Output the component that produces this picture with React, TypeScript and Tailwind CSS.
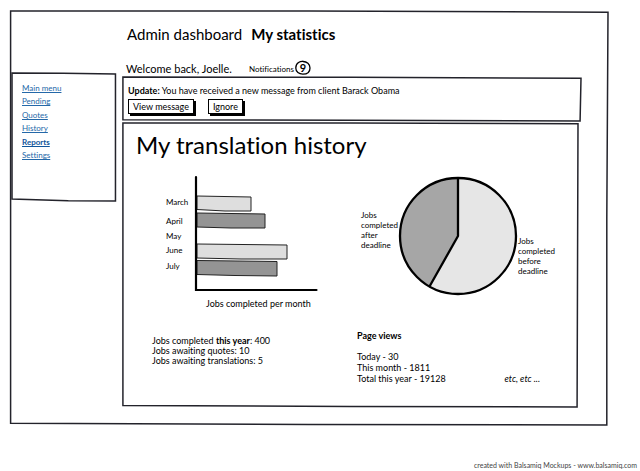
import React from 'react';

type FrameProps = { points: string };

function SketchFrame({ points }: FrameProps) {
  return (
    <svg
      className="pointer-events-none absolute inset-0 h-full w-full overflow-visible"
      viewBox="0 0 100 100"
      preserveAspectRatio="none"
      aria-hidden="true"
    >
      <polygon
        points={points}
        fill="none"
        stroke="#23232b"
        strokeWidth="1.5"
        vectorEffect="non-scaling-stroke"
      />
    </svg>
  );
}

const links = ['Main menu', 'Pending', 'Quotes', 'History', 'Reports', 'Settings'];

function Sidebar() {
  return (
    <nav className="relative mt-[62px] h-32 self-start pl-3 pt-[9px]" aria-label="Main">
      <SketchFrame points="1.9,0 50,0.2 99.5,0.8 99.5,100 55,99.8 1.9,98.5" />
      <ul>
        {links.map((name) => (
          <li key={name} className="mb-px h-[13px] text-[8px] leading-[13px] odd:mb-0">
            <a href="#" className={name === 'Reports' ? 'font-bold text-[#11559a] underline' : 'text-[#2468a8] underline'}>
              {name}
            </a>
          </li>
        ))}
      </ul>
    </nav>
  );
}

function SketchButton({ children }: { children: React.ReactNode }) {
  return (
    <button
      type="button"
      className="h-[15px] border border-black bg-white px-1 text-[9px] leading-[12px] shadow-[2px_2px_0_#000]"
    >
      {children}
    </button>
  );
}

const bars = [
  { month: 'March', y: 31, shape: '34,22 88,23 88,37 62,37 34,35.500', fill: '#dedede' },
  { month: 'April', y: 50, shape: '34,39 102,40 102,54 68,54 34,53', fill: '#949494' },
  { month: 'May', y: 65, shape: '', fill: 'none' },
  { month: 'June', y: 79, shape: '34,70 124,71 124,85 78,85 34,84', fill: '#dedede' },
  { month: 'July', y: 95, shape: '34,86.500 114,87.500 114,102 72,101.500 34,100.500', fill: '#949494' },
];

function BarChart() {
  return (
    <figure className="ml-[27px] w-40">
      <svg width="160" height="120" viewBox="0 0 160 120" role="img" aria-label="Jobs completed per month">
        {bars.map((bar) => (
          <g key={bar.month}>
            <text x="3" y={bar.y} fontSize="8">
              {bar.month}
            </text>
            {bar.shape && <polygon points={bar.shape} fill={bar.fill} stroke="#222" strokeWidth="1" />}
          </g>
        ))}
        <path d="M33 3V116H153.500" fill="none" stroke="#000" strokeWidth="2.200" strokeLinecap="round" />
      </svg>
      <figcaption className="mt-1 whitespace-nowrap pl-[43px] text-[9px] leading-[11px]">Jobs completed per month</figcaption>
    </figure>
  );
}

const before = ['Jobs', 'completed', 'before', 'deadline'];
const after = ['Jobs', 'completed', 'after', 'deadline'];

function PieChart() {
  return (
    <svg width="208" height="124" viewBox="0 0 208 124" role="img" aria-label="Jobs completed before and after deadline">
      <circle cx="101" cy="62" r="58" fill="#e6e6e6" />
      <path d="M101 62V4A58 58 0 0 0 72.500 112.500Z" fill="#a6a6a6" />
      <circle cx="101" cy="62" r="58" fill="none" stroke="#000" strokeWidth="2.300" />
      <path d="M101 4V62L72.500 112.500" fill="none" stroke="#000" strokeWidth="2.300" strokeLinejoin="round" />
      <text fontSize="8">
        {after.map((word, i) => (
          <tspan key={word} x="4" y={44 + i * 10}>
            {word}
          </tspan>
        ))}
      </text>
      <text fontSize="8">
        {before.map((word, i) => (
          <tspan key={word} x="161" y={70 + i * 10}>
            {word}
          </tspan>
        ))}
      </text>
    </svg>
  );
}

export default function App() {
  return (
    <div className="bg-white pl-[10px] pr-[3px] pt-[11px] font-['Lato','Open_Sans',sans-serif] text-black [font-variant-ligatures:none]">
      <div className="relative mr-[29px] grid grid-cols-[106px_1fr] gap-x-[6px] pb-[18px] pr-[27px]">
        <SketchFrame points="0.1,0 50,0 100,0.3 99.8,50 99.8,100 50,99.9 0.1,99.6" />
        <Sidebar />
        <main>
          <header>
            <h1 className="flex gap-[9px] pl-[5px] pt-[14px] text-[15px] leading-[18px]">
              <span>Admin dashboard</span>
              <b>My statistics</b>
            </h1>
            <div className="mt-[18px] flex h-4 items-center pl-1">
              <p className="w-[123px] text-[11px]">Welcome back, Joelle.</p>
              <p className="w-[46px] text-[8px]">Notifications</p>
              <span className="relative flex h-4 w-4 items-center justify-center self-start text-[11px] font-bold leading-4">
                <svg className="absolute inset-0 overflow-visible" width="16" height="16" viewBox="0 0 16 16" aria-hidden="true">
                  <path
                    d="M10 .800C5-.500.800 2 .800 7c0 4 3.200 6.200 7 6.200 4.500 0 7.200-2.500 7.200-6.200C15 3 12 .300 7.500.500"
                    fill="none"
                    stroke="#000"
                    strokeWidth="1.300"
                  />
                </svg>
                <span className="h-4 leading-[14px]">9</span>
              </span>
            </div>
          </header>

          <section className="relative pb-[7px] pl-[6px] pt-[8px]">
            <SketchFrame points="0.2,0 50,0.5 100,3 99.8,100 50,98.500 0.2,97" />
            <p className="text-[9px] leading-[12px]">
              <b>Update:</b> You have received a new message from client Barack Obama
            </p>
            <div className="mt-[2px] flex gap-[14px]">
              <SketchButton>View message</SketchButton>
              <SketchButton>Ignore</SketchButton>
            </div>
          </section>

          <section className="relative mr-[3px] mt-[2px] pb-[23px] pl-[14px]">
            <SketchFrame points="0.2,0 50,0 100,0.3 99.8,100 50,99.8 0.2,99.5" />
            <h2 className="pt-[7px] text-[24px] leading-[30px]">My translation history</h2>
            <div className="mt-[14px] grid grid-cols-2">
              <BarChart />
              <PieChart />
            </div>
            <div className="mt-[21px] grid grid-cols-2 text-[9px]">
              <div className="pl-4 pt-[6px] leading-[10px]">
                <p>
                  Jobs completed <b>this year</b>: 400
                </p>
                <p>Jobs awaiting quotes: 10</p>
                <p>Jobs awaiting translations: 5</p>
              </div>
              <div className="leading-[11px]">
                <h3 className="font-bold">Page views</h3>
                <p className="mt-[10px]">Today - 30</p>
                <p>This month - 1811</p>
                <div className="flex justify-between pr-[38px]">
                  <p>Total this year - 19128</p>
                  <em>etc, etc ...</em>
                </div>
              </div>
            </div>
          </section>
        </main>
      </div>
      <footer className="mt-[34px] text-right text-[7px] leading-[12px] text-[#444]">
        created with Balsamiq Mockups - www.balsamiq.com
      </footer>
    </div>
  );
}
